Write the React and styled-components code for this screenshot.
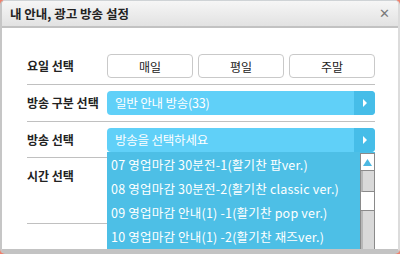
import React from "react";
import styled, { createGlobalStyle } from "styled-components";

const Global = createGlobalStyle`
  html, body { margin: 0; padding: 0; }
  body {
    background: #f0806c;
    width: 400px;
    height: 254px;
    overflow: hidden;
    font-family: "Noto Sans CJK KR", "Noto Sans", sans-serif;
  }
`;

const Dialog = styled.div`
  box-sizing: border-box;
  width: 400px;
  height: 254px;
  background: #fff;
  border-top: 1px solid #cfd3d6;
  border-left: 2px solid #c6c6c6;
  border-right: 2px solid #dcdcdc;
  border-bottom: 5px solid #c3c3c3;
  border-radius: 5px;
  overflow: hidden;
  display: flex;
  flex-direction: column;
`;

const Header = styled.div`
  flex: none;
  height: 25px;
  display: flex;
  align-items: center;
  justify-content: space-between;
  padding: 0 8px 0 8px;
  background: linear-gradient(#f6f6f6, #e2e2e2);
  border-bottom: 2px solid #c2c2c2;
`;

const Title = styled.div`
  font-size: 12.5px;
  font-weight: bold;
  color: #222;
  letter-spacing: 0;
`;

const Close = styled.span`
  font-family: "DejaVu Sans", sans-serif;
  font-size: 13px;
  font-weight: bold;
  color: #7a7a7a;
`;

const Body = styled.div`
  padding: 26px 23px 0 25px;
  display: flex;
  flex-direction: column;
`;

const Row = styled.div`
  display: flex;
  align-items: flex-start;
  padding: 6px 0;
  border-bottom: 1px solid ${(p) => (p.$line ? "#c0c0c0" : "transparent")};
  min-height: ${(p) => p.$h || 24}px;
  &:first-child { padding-top: 0; }
`;

const PartialRow = styled.div`
  display: flex;
  align-items: flex-start;
  padding: 6px 0;
  min-height: ${(p) => p.$h || 24}px;
  position: relative;
  &::after {
    content: "";
    position: absolute;
    left: 0;
    bottom: 0;
    width: 80px;
    height: 1px;
    background: #c0c0c0;
  }
`;

const Label = styled.div`
  flex: none;
  width: 80px;
  line-height: 24px;
  font-size: 12px;
  font-weight: bold;
  color: #222;
  letter-spacing: 0;
  white-space: nowrap;
`;

const Control = styled.div`
  flex: 1;
  display: flex;
  gap: 5px;
  position: relative;
`;

const DayButton = styled.button`
  flex: 1;
  height: 24px;
  padding: 0;
  background: #fff;
  border: 1px solid #c9c9c9;
  border-radius: 4px;
  font-family: inherit;
  font-size: 12px;
  color: #222;
`;

const Select = styled.div`
  flex: 1;
  height: 24px;
  display: flex;
  background: #60d0f8;
  border-radius: 4px;
  overflow: hidden;
  color: #fff;
  font-size: 12.5px;
  letter-spacing: -0.2px;
`;

const SelectText = styled.div`
  flex: 1;
  line-height: 24px;
  padding-left: 8px;
`;

const SelectArrow = styled.div`
  flex: none;
  width: 21px;
  background: #46bde8;
  display: flex;
  align-items: center;
  justify-content: center;
`;

const Dropdown = styled.div`
  position: absolute;
  left: 0;
  right: 0;
  top: 24px;
  height: 110px;
  background: #4dbfe6;
  display: flex;
  z-index: 2;
`;

const List = styled.ul`
  flex: 1;
  list-style: none;
  margin: 0;
  padding: 1px 0 0 0;
`;

const Item = styled.li`
  height: 24px;
  line-height: 24px;
  padding-left: 4px;
  color: #fff;
  font-size: 12.5px;
  letter-spacing: 0.2px;
  white-space: nowrap;
  overflow: hidden;
`;

const Scrollbar = styled.div`
  flex: none;
  width: 15px;
  box-sizing: border-box;
  margin-top: 1px;
  border: 1px solid #8a8a8a;
  display: flex;
  flex-direction: column;
  background: #fff;
`;

const ScrollBtn = styled.div`
  height: 16px;
  display: flex;
  align-items: center;
  justify-content: center;
  background: #fff;
  border-bottom: 1px solid #8a8a8a;
`;

const Track = styled.div`
  height: ${(p) => p.$h}px;
  background: ${(p) => (p.$light ? "#fff" : "#d9d9d9")};
  border-left: ${(p) => (p.$light ? "0" : "2px solid #b8b8b8")};
  border-bottom: 1px solid #8a8a8a;
  flex: ${(p) => (p.$grow ? 1 : "none")};
`;

const Arrow = () => (
  <svg width="6" height="8" viewBox="0 0 6 8">
    <path d="M1 0 L5 4 L1 8 Z" fill="#fff" />
  </svg>
);

const UpTri = () => (
  <svg width="9" height="7" viewBox="0 0 9 7">
    <path d="M4.5 0 L9 7 L0 7 Z" fill="#4cb8e2" />
  </svg>
);

const items = [
  "07 영업마감 30분전-1(활기찬 팝ver.)",
  "08 영업마감 30분전-2(활기찬 classic ver.)",
  "09 영업마감 안내(1) -1(활기찬 pop ver.)",
  "10 영업마감 안내(1) -2(활기찬 재즈ver.)",
];

export default function App() {
  return (
    <>
      <Global />
      <Dialog>
        <Header>
          <Title>내 안내, 광고 방송 설정</Title>
          <Close>✕</Close>
        </Header>
        <Body>
          <Row $line>
            <Label>요일 선택</Label>
            <Control>
              <DayButton>매일</DayButton>
              <DayButton>평일</DayButton>
              <DayButton>주말</DayButton>
            </Control>
          </Row>
          <Row $line>
            <Label>방송 구분 선택</Label>
            <Control>
              <Select>
                <SelectText>일반 안내 방송(33)</SelectText>
                <SelectArrow><Arrow /></SelectArrow>
              </Select>
            </Control>
          </Row>
          <PartialRow>
            <Label>방송 선택</Label>
            <Control>
              <Select>
                <SelectText>방송을 선택하세요</SelectText>
                <SelectArrow><Arrow /></SelectArrow>
              </Select>
              <Dropdown>
                <List>
                  {items.map((t) => (
                    <Item key={t}>{t}</Item>
                  ))}
                </List>
                <Scrollbar>
                  <ScrollBtn><UpTri /></ScrollBtn>
                  <Track $h={20} />
                  <Track $h={18} $light />
                  <Track $grow />
                </Scrollbar>
              </Dropdown>
            </Control>
          </PartialRow>
          <PartialRow $h={54}>
            <Label>시간 선택</Label>
          </PartialRow>
        </Body>
      </Dialog>
    </>
  );
}
